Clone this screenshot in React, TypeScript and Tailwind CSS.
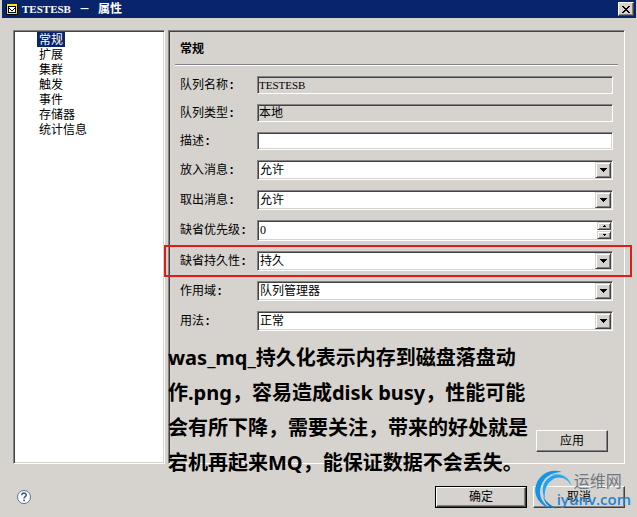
import type { ReactNode } from "react";

const SECTIONS = ["常规", "扩展", "集群", "触发", "事件", "存储器", "统计信息"];

const SUNKEN =
  "border border-t-[#848284] border-l-[#848284] border-r-white border-b-white shadow-[inset_1px_1px_#424142,inset_-1px_-1px_#d6d3ce]";

const RAISED =
  "border border-t-white border-l-white border-r-[#424142] border-b-[#424142] bg-[#d6d3ce] shadow-[inset_-1px_-1px_#848284]";

const RAISED_SMALL =
  "border border-t-[#d6d3ce] border-l-[#d6d3ce] border-r-[#424142] border-b-[#424142] bg-[#d6d3ce] shadow-[inset_1px_1px_#fff,inset_-1px_-1px_#848284]";

function Row({
  id,
  label,
  marked,
  children,
}: {
  id: string;
  label: string;
  marked?: boolean;
  children: ReactNode;
}) {
  return (
    <div className="relative flex items-center">
      <label htmlFor={id} className="w-[77px] shrink-0 leading-4">
        {label}
        <span className="font-['Liberation_Mono',monospace] font-bold">:</span>
      </label>
      {children}
      {marked && (
        <div className="pointer-events-none absolute -inset-y-[6px] -left-4 -right-[19px] border-2 border-[#e71818]" />
      )}
    </div>
  );
}

function TextField({
  id,
  value,
  readOnly,
}: {
  id: string;
  value?: string;
  readOnly?: boolean;
}) {
  return (
    <input
      id={id}
      readOnly={readOnly}
      defaultValue={value}
      className={`h-[18px] min-w-0 flex-1 px-px outline-none ${readOnly ? "bg-[#d6d3ce]" : "bg-white"} ${SUNKEN}`}
    />
  );
}

function Combo({ id, options }: { id: string; options: string[] }) {
  return (
    <div className="relative min-w-0 flex-1">
      <select
        id={id}
        className={`block h-5 w-full appearance-none bg-white pl-[2px] leading-4 outline-none ${SUNKEN}`}
      >
        {options.map((o) => (
          <option key={o}>{o}</option>
        ))}
      </select>
      <span
        className={`pointer-events-none absolute right-[2px] top-[2px] flex size-4 items-center justify-center ${RAISED_SMALL}`}
      >
        <svg width="7" height="4" shapeRendering="crispEdges">
          <path d="M0 0h7v1H6v1H5v1H4v1H3V3H2V2H1V1H0z" />
        </svg>
      </span>
    </div>
  );
}

function TitleBar() {
  return (
    <header className="ml-[2px] mr-px flex h-[18px] items-center bg-[#08246b] pl-1 pr-[2px] text-white">
      <svg width="12" height="12" viewBox="0 0 12 12" className="mt-[2px]" shapeRendering="crispEdges">
        <path d="M0 0h12v11H0z" fill="#000" />
        <path d="M1 0h10v10H1z" fill="#ffe318" />
        <path d="M2 2h8v7H2z" fill="#000" />
        <path d="M3 3h6v5H3z" fill="#fff" />
        <path d="M3 4h1v1H3zM4 5h1v1H4zM5 6h2v1H5zM7 5h1v1H7zM8 4h1v1H8z" fill="#000" />
      </svg>
      <h1 className="ml-1 flex-1 whitespace-pre font-['Liberation_Serif','Noto_Sans_CJK_SC',serif] text-[11px] font-bold leading-4">
        TESTESB
        <span className="mx-2">－</span>
        <span className="text-[12px]">属性</span>
      </h1>
      <button
        type="button"
        aria-label="关闭"
        className={`flex h-[14px] w-4 items-center justify-center ${RAISED}`}
      >
        <svg width="8" height="7" shapeRendering="crispEdges">
          <path d="M0 0h2v1h1v1h2V1h1V0h2v1H7v1H6v1H5v1h1v1h1v1h1v1H6V6H5V5H3v1H2v1H0V6h1V5h1V4h1V3H2V2H1V1H0z" />
        </svg>
      </button>
    </header>
  );
}

function Watermark() {
  return (
    <div className="pointer-events-none absolute bottom-[6px] right-[6px] flex items-center">
      <svg width="40" height="42" viewBox="0 0 40 42" className="-mr-[17px]" fill="none">
        <path d="M28 3C16-1 5 6 2 16c-3 10 3 20 14 23C8 34 4 26 7 17 10 8 18 3 28 3z" fill="#1295e6" />
        <path d="M38 18C35 6 24 3 16 8 8 13 7 22 11 30c-1-8 1-15 7-19 7-5 16-2 20 7z" fill="#22a4ef" />
        <path d="M36 13C31 6 25 4 18 6" stroke="#5cbcf2" />
        <path d="M9 27c3 6 8 10 14 12-6 1-12-3-14-12z" fill="#0d7fd0" />
      </svg>
      <div>
        <p className="pl-[17px] text-[16px] leading-[18px] text-[#72777f]">运维网</p>
        <p className="font-['Open_Sans',sans-serif] text-[15px] font-semibold leading-4 text-[#2583d3]">
          iyunv.com
        </p>
      </div>
    </div>
  );
}

export default function App() {
  return (
    <div className="relative flex min-h-screen flex-col bg-[#d6d3ce] font-['Liberation_Serif','Noto_Sans_CJK_SC',sans-serif] text-[12px] text-black">
      <TitleBar />

      <main className="flex flex-1 gap-[3px] pl-[13px] pr-3 pt-3">
        <nav className={`w-[152px] shrink-0 bg-white p-px ${SUNKEN}`}>
          <ul className="pl-[22px]">
            {SECTIONS.map((s, i) => (
              <li key={s} className="flex h-[15px]">
                <a
                  href="#"
                  className={`px-[2px] leading-[17px] ${i === 0 ? "bg-[#08246b] text-white" : ""}`}
                >
                  {s}
                </a>
              </li>
            ))}
          </ul>
        </nav>

        <section className={`flex min-w-0 flex-1 flex-col p-px ${SUNKEN}`}>
          <h2 className="mx-[5px] h-[34px] border-b border-white pl-[5px] text-[12px] font-bold leading-[34px] shadow-[inset_0_-1px_#848284]">
            常规
          </h2>
          <form className="flex flex-1 flex-col gap-[10px] p-[10px]">
            <Row id="name" label="队列名称">
              <input
                id="name"
                readOnly
                defaultValue="TESTESB"
                className={`h-[18px] min-w-0 flex-1 bg-[#d6d3ce] px-px text-[11px] outline-none ${SUNKEN}`}
              />
            </Row>
            <Row id="type" label="队列类型">
              <TextField id="type" value="本地" readOnly />
            </Row>
            <Row id="desc" label="描述">
              <TextField id="desc" />
            </Row>
            <Row id="put" label="放入消息">
              <Combo id="put" options={["允许", "禁止"]} />
            </Row>
            <Row id="get" label="取出消息">
              <Combo id="get" options={["允许", "禁止"]} />
            </Row>
            <Row id="priority" label="缺省优先级">
              <div className={`flex h-[21px] min-w-0 flex-1 bg-white p-px ${SUNKEN}`}>
                <input
                  id="priority"
                  defaultValue="0"
                  className="h-4 min-w-0 flex-1 px-px leading-4 outline-none"
                />
                <div className="flex flex-col gap-px">
                  <button
                    type="button"
                    aria-label="增加"
                    className={`flex h-2 w-[14px] items-center justify-center ${RAISED_SMALL}`}
                  >
                    <svg width="3" height="2" shapeRendering="crispEdges">
                      <path d="M1 0h1v1h1v1H0V1h1z" />
                    </svg>
                  </button>
                  <button
                    type="button"
                    aria-label="减少"
                    className={`flex h-2 w-[14px] items-center justify-center ${RAISED_SMALL}`}
                  >
                    <svg width="3" height="2" shapeRendering="crispEdges">
                      <path d="M0 0h3v1H2v1H1V1H0z" />
                    </svg>
                  </button>
                </div>
              </div>
            </Row>
            <Row id="persistence" label="缺省持久性" marked>
              <Combo id="persistence" options={["持久", "非持久"]} />
            </Row>
            <Row id="scope" label="作用域">
              <Combo id="scope" options={["队列管理器", "单元"]} />
            </Row>
            <Row id="usage" label="用法">
              <Combo id="usage" options={["正常", "传输"]} />
            </Row>
            <button
              type="button"
              className={`mr-[5px] mt-auto h-[22px] w-[72px] self-end leading-4 ${RAISED}`}
            >
              应用
            </button>
          </form>
        </section>
      </main>

      <footer className="flex items-center gap-[6px] pb-[9px] pl-4 pr-3 pt-[22px]">
        <button type="button" aria-label="帮助" className="mr-auto">
          <svg width="16" height="16" viewBox="0 0 16 16" fill="none">
            <circle cx="8" cy="8" r="6.500" fill="#fff" stroke="#5b7096" />
            <path d="M5.800 6.300c0-3 4.600-2.800 4.400-.2C10.100 7.600 8 7.600 8 9.600" stroke="#44598c" strokeWidth="1.600" />
            <path d="M7.200 10.700h1.700v1.600H7.200z" fill="#44598c" />
          </svg>
        </button>
        <div className="bg-black p-px">
          <button type="button" className={`block h-5 w-[90px] leading-4 ${RAISED}`}>
            确定
          </button>
        </div>
        <button type="button" className={`h-[22px] w-[92px] leading-4 ${RAISED}`}>
          取消
        </button>
      </footer>

      <p className="pointer-events-none absolute left-[168px] top-[340px] whitespace-nowrap font-['Noto_Sans','Noto_Sans_CJK_SC',sans-serif] text-[20px] font-bold leading-[35px]">
        was_mq_持久化表示内存到磁盘落盘动
        <br />
        作.png，容易造成disk busy，性能可能
        <br />
        会有所下降，需要关注，带来的好处就是
        <br />
        宕机再起来MQ，能保证数据不会丢失。
      </p>

      <Watermark />
    </div>
  );
}
